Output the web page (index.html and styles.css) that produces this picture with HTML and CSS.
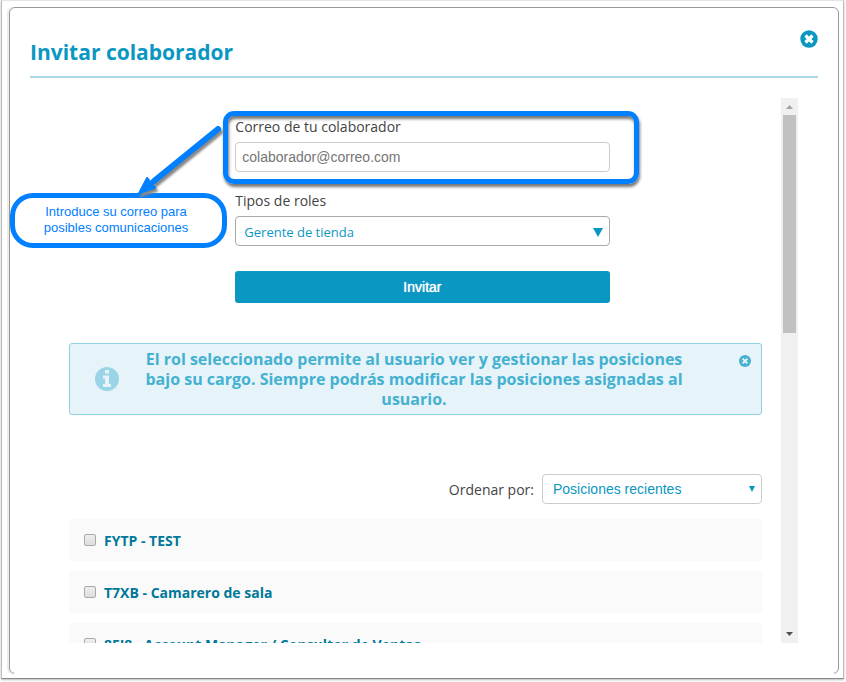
FILE: index.html
```
<!DOCTYPE html>
<html lang="es">
<head>
  <meta charset="UTF-8" />
  <title>Invitar colaborador</title>
  <link rel="stylesheet" href="styles.css">
</head>
<body>

  <div class="frame">
    <div class="modal">
      <header class="modal-header">
        <h1>Invitar colaborador</h1>
        <button type="button" class="close" aria-label="Cerrar">
          <svg viewBox="0 0 18 18" width="18" height="18">
            <circle cx="9" cy="9" r="8.7" fill="#0a97c2"/>
            <path d="M5.500 5.500l7 7M12.500 5.500l-7 7" stroke="#fff" stroke-width="3.2"/>
          </svg>
        </button>
      </header>

      <div class="scroll-area">
        <div class="content">
          <form class="invite">
            <div class="field highlighted">
              <label for="correo">Correo de tu colaborador</label>
              <input type="email" id="correo" placeholder="colaborador@correo.com">
            </div>
            <div class="field">
              <label for="rol">Tipos de roles</label>
              <div class="select">
                <select id="rol">
                  <option>Gerente de tienda</option>
                </select>
                <svg class="arrow" viewBox="0 0 10 9" width="10" height="9"><path d="M0 0h10L5 9z"/></svg>
              </div>
            </div>
            <button type="button" class="submit">Invitar</button>
          </form>

          <div class="alert">
            <svg class="info" viewBox="0 0 24 24" width="24" height="24">
              <circle cx="12" cy="12" r="12" fill="#99d5e7"/>
              <path d="M10 3h4v3.500h-4zM8 8.500h6V17h2v3H8v-3h2v-5.500H8z" fill="#e6f4f9"/>
            </svg>
            <p>El rol seleccionado permite al usuario ver y gestionar las posiciones bajo su cargo. Siempre podrás modificar las posiciones asignadas al usuario.</p>
            <button type="button" class="dismiss" aria-label="Cerrar aviso">
              <svg viewBox="0 0 18 18" width="12" height="12">
                <circle cx="9" cy="9" r="9" fill="#45b1d1"/>
                <path d="M5.500 5.500l7 7M12.500 5.500l-7 7" stroke="#e6f4f9" stroke-width="3"/>
              </svg>
            </button>
          </div>

          <div class="sort">
            <label for="orden">Ordenar por:</label>
            <div class="select">
              <select id="orden">
                <option>Posiciones recientes</option>
              </select>
              <svg class="arrow" viewBox="0 0 10 9" width="6" height="6" preserveAspectRatio="none"><path d="M0 0h10L5 9z"/></svg>
            </div>
          </div>

          <ul class="positions">
            <li><label><input type="checkbox">FYTP - TEST</label></li>
            <li><label><input type="checkbox">T7XB - Camarero de sala</label></li>
            <li><label><input type="checkbox">8FI8 - Account Manager / Consultor de Ventas</label></li>
          </ul>
        </div>

        <div class="scrollbar">
          <svg viewBox="0 0 17 17" width="17" height="17"><path d="M5 11h7L8.500 7z" fill="#a3a3a3"/></svg>
          <div class="thumb"></div>
          <svg viewBox="0 0 17 17" width="17" height="17"><path d="M5 6h7L8.500 10z" fill="#505050"/></svg>
        </div>
      </div>

      <div class="note">
        <p>Introduce su correo para posibles comunicaciones</p>
        <svg class="pointer" viewBox="0 0 90 76" width="90" height="76">
          <path d="M81 8L17 60" stroke="#0080ff" stroke-width="6" stroke-linecap="round"/>
          <path d="M1 73L10 56L19 67z" fill="#0080ff" stroke="#0080ff"/>
        </svg>
      </div>
    </div>
  </div>

</body>
</html>
```

FILE: styles.css
```
* {
  box-sizing: border-box;
}
body {
  margin: 0;
  background: #fff;
  color: #444;
  font-family: "Open Sans", sans-serif;
  font-size: 14px;
}
h1, p, ul {
  margin: 0;
  padding: 0;
}
button {
  border: none;
  padding: 0;
  background: none;
  cursor: pointer;
}
svg {
  display: block;
}
.frame {
  height: calc(100vh - 3px);
  margin: 0 2px 3px 1px;
  padding: 6px 4px 4px 7px;
  border: 1px solid #bbb;
  border-top-color: #e4e4e4;
  border-bottom-color: #888;
  box-shadow: 0 1px 2px #bbb;
}
.modal {
  position: relative;
  display: flex;
  flex-direction: column;
  height: 100%;
  padding: 0 20px 30px;
  border: 1px solid #999;
  border-radius: 6px;
  box-shadow: -2px 0 #ecece8;
}
/* only the corners of the bottom border stay visible */
.modal::after {
  content: "";
  position: absolute;
  bottom: -1px;
  left: 4px;
  right: 4px;
  height: 1px;
  background: #fff;
}
.modal-header {
  display: flex;
  justify-content: space-between;
  align-items: flex-start;
  height: 70px;
  padding-top: 22px;
  border-bottom: 2px solid #add6e6;
}
.modal-header h1 {
  padding-top: 8px;
  color: #0a97c2;
  font-size: 21px;
  line-height: 28px;
}
.scroll-area {
  display: flex;
  flex: 1;
  min-height: 0;
  margin: 20px 20px 0 39px;
}
.content {
  flex: 1;
  margin-right: 19px;
  overflow: hidden;
}
.scrollbar {
  display: flex;
  flex-direction: column;
  width: 17px;
  background: #f0f0f0;
}
.thumb {
  height: 40%;
  margin: 0 2px auto;
  background: #c1c1c1;
}

/* invitation form */
.invite {
  width: 54%;
  margin: 19px 0 40px 24%;
}
.field {
  position: relative;
  margin-bottom: 19px;
}
.field label {
  display: block;
  margin-bottom: 5px;
  line-height: 20px;
}
.highlighted::after {
  content: "";
  position: absolute;
  top: -6px;
  right: -29px;
  bottom: -12px;
  left: -12px;
  border: 5px solid #0080ff;
  border-radius: 11px;
  box-shadow: 1px 3px 3px #777, inset 1px 3px 3px #777;
  pointer-events: none;
}
input[type="email"],
select {
  display: block;
  appearance: none;
  width: 100%;
  height: 30px;
  padding: 0 6px;
  border: 1px solid #ccc;
  border-radius: 4px;
  background: #fff;
  font: 14px "Liberation Sans", sans-serif;
}
input::placeholder {
  color: #757575;
}
.select {
  position: relative;
}
select {
  padding: 0 10px;
  color: #0a97c2;
}
#rol {
  padding: 2px 8px 0;
  border-color: #aaa;
  font: 13px "Open Sans", sans-serif;
}
.arrow {
  position: absolute;
  top: 12px;
  right: 7px;
  fill: #0a97c2;
}
.submit {
  display: block;
  width: 100%;
  height: 32px;
  margin-top: 25px;
  border-radius: 3px;
  background: #0a97c2;
  color: #fff;
  font: 14px "Liberation Sans", sans-serif;
  text-shadow: 0 0 1px #fff;
}

/* notice */
.alert {
  display: flex;
  padding: 5px 10px 5px 25px;
  border: 1px solid #8fd0e2;
  border-radius: 3px;
  background: #e6f4f9;
  color: #45b1d1;
}
.alert p {
  flex: 1;
  padding: 0 54px 0 24px;
  font-size: 16px;
  font-weight: bold;
  line-height: 20px;
  text-align: center;
}
.info {
  align-self: center;
}
.dismiss {
  align-self: flex-start;
  margin-top: 6px;
}

.sort {
  display: flex;
  justify-content: flex-end;
  align-items: center;
  gap: 8px;
  margin: 59px 0 15px;
}
.sort .select {
  width: 220px;
}
.positions {
  display: grid;
  gap: 10px;
  list-style: none;
}
.positions li {
  background: #fafafa;
}
.positions label {
  display: flex;
  align-items: center;
  gap: 8px;
  height: 42px;
  padding-left: 15px;
  color: #007899;
  font-weight: bold;
}
.positions input {
  appearance: none;
  width: 12px;
  height: 12px;
  margin: 0;
  border: 1px solid #aaa;
  border-radius: 2px;
  background: linear-gradient(#eee, #ddd);
}

/* callout over the form */
.note {
  position: absolute;
  top: 185px;
  left: 0;
  width: 217px;
  padding: 6px 26px 7px;
  border: 5px solid #0080ff;
  border-radius: 23px;
  background: #fff;
  color: #0080ff;
  font: 13px/16px "Liberation Sans", sans-serif;
}
.note p {
  width: 150px;
  text-align: center;
}
.pointer {
  position: absolute;
  top: -77px;
  left: 122px;
  overflow: visible;
  filter: drop-shadow(2px 3px 1px #888);
}
```
